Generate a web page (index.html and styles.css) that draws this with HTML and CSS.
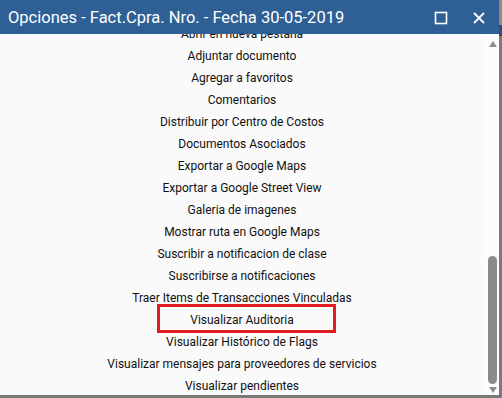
FILE: index.html
```html
<!DOCTYPE html>
<html lang="es">
<head>
    <meta charset="UTF-8">
    <title>Opciones</title>
    <link rel="stylesheet" href="styles.css">
</head>
<body>
    <div class="screen">
        <div class="window">
            <div class="titlebar">
                <span class="title">Opciones - Fact.Cpra. Nro. - Fecha 30-05-2019</span>
                <span class="tools">
                    <svg class="tool" width="14" height="14" viewBox="0 0 14 14">
                        <rect x="1.5" y="1.5" width="11" height="11" fill="none" stroke="#fff" stroke-width="1.6"/>
                    </svg>
                    <svg class="tool" width="14" height="14" viewBox="0 0 14 14">
                        <path d="M2 2 L12 12 M12 2 L2 12" stroke="#fff" stroke-width="1.8"/>
                    </svg>
                </span>
            </div>
            <div class="body">
                <div class="list">
                    <div class="items">
                        <div class="item">Abrir en nueva pestaña</div>
                        <div class="item">Adjuntar documento</div>
                        <div class="item">Agregar a favoritos</div>
                        <div class="item">Comentarios</div>
                        <div class="item">Distribuir por Centro de Costos</div>
                        <div class="item">Documentos Asociados</div>
                        <div class="item">Exportar a Google Maps</div>
                        <div class="item">Exportar a Google Street View</div>
                        <div class="item">Galeria de imagenes</div>
                        <div class="item">Mostrar ruta en Google Maps</div>
                        <div class="item">Suscribir a notificacion de clase</div>
                        <div class="item">Suscribirse a notificaciones</div>
                        <div class="item">Traer Items de Transacciones Vinculadas</div>
                        <div class="item marked"><span>Visualizar Auditoria</span></div>
                        <div class="item">Visualizar Histórico de Flags</div>
                        <div class="item">Visualizar mensajes para proveedores de servicios</div>
                        <div class="item">Visualizar pendientes</div>
                    </div>
                </div>
                <div class="scrollbar">
                    <div class="arrow up"></div>
                    <div class="track"><div class="thumb"></div></div>
                    <div class="arrow down"></div>
                </div>
            </div>
        </div>
        <div class="edge"></div>
    </div>
    <div class="bottom"></div>
</body>
</html>
```

FILE: styles.css
```css
html, body {
    margin: 0;
    padding: 0;
    height: 398px;
    overflow: hidden;
    font-family: Roboto, "Liberation Sans", sans-serif;
}
.screen {
    display: flex;
    height: 395px;
}
.window {
    width: 499px;
    display: flex;
    flex-direction: column;
    background: #fafafa;
}
.edge {
    flex: 1;
    background: linear-gradient(#8a8a8a 0, #8a8a8a 25px, #2d4f7a 25px, #2d4f7a 36px, #7a7a7a 36px);
}
.titlebar {
    height: 34px;
    background: #2e6096;
    color: #fff;
    display: flex;
    align-items: center;
    padding-left: 8px;
    position: relative;
    z-index: 1;
}
.title {
    font-size: 16.5px;
    flex: 1;
    white-space: nowrap;
}
.tools {
    display: flex;
    gap: 24px;
    padding-right: 13px;
    margin-top: 1px;
}
.body {
    flex: 1;
    display: flex;
    overflow: hidden;
}
.list {
    width: 484px;
    overflow: hidden;
}
.items {
    margin-top: -11px;
}
.item {
    height: 22px;
    line-height: 22px;
    text-align: center;
    font-size: 12px;
    color: #111;
    white-space: nowrap;
}
.marked span {
    position: relative;
    display: inline-block;
}
.marked span::after {
    content: '';
    position: absolute;
    left: -33px;
    right: -42px;
    top: -5px;
    bottom: -2px;
    border: 3px solid #e01e22;
}
.scrollbar {
    width: 15px;
    display: flex;
    flex-direction: column;
    align-items: center;
    padding-top: 7px;
    background: #fcfcfc;
}
.arrow {
    width: 0;
    height: 0;
    border-left: 4.5px solid transparent;
    border-right: 4.5px solid transparent;
    margin-left: 2px;
}
.arrow.up {
    border-bottom: 6px solid #8c8c8c;
}
.arrow.down {
    border-top: 6px solid #8c8c8c;
    margin-bottom: 2px;
}
.track {
    flex: 1;
    display: flex;
    flex-direction: column;
    justify-content: flex-end;
    padding-bottom: 3px;
}
.thumb {
    width: 9px;
    height: 128px;
    margin-left: 2px;
    background: #8a8a8a;
    border-radius: 5px;
}
.bottom {
    height: 3px;
    background: #7a7a7a;
}
```
